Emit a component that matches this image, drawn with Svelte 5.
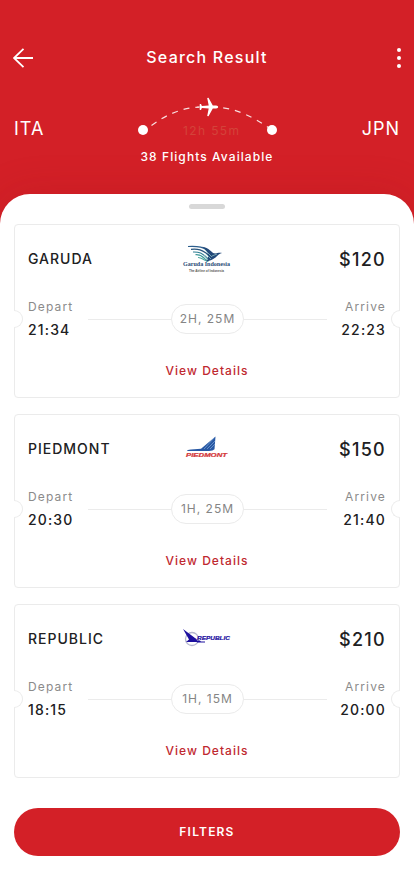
<script>
  let flights = $state([
    { id: 'garuda', airline: 'GARUDA', price: 120, depart: '21:34', arrive: '22:23', duration: '2H, 25M' },
    { id: 'piedmont', airline: 'PIEDMONT', price: 150, depart: '20:30', arrive: '21:40', duration: '1H, 25M' },
    { id: 'republic', airline: 'REPUBLIC', price: 210, depart: '18:15', arrive: '20:00', duration: '1H, 15M' }
  ]);
</script>

{#snippet logo(id)}
  <svg class="logo" width="50" height="36" viewBox="0 0 50 36" aria-hidden="true">
    {#if id === 'garuda'}
      <g fill="none" stroke-width="1.2">
        <path stroke="#2b5d8c" d="M6 5.5C15 5 20 5.3 24 8.5S29 13 32 15" />
        <path stroke="#28547c" d="M9 8.3C17 7.7 20 9 24 12S27 16 30 17" />
        <path stroke="#2c7c91" d="M11 11C18 10.8 20 12.4 23 15S25 18 28 18.5" />
        <path stroke="#419a9c" d="M13.5 13.7C18 13.3 20 15 22 17S24 19.5 27 20" />
        <path stroke="#4fa79d" d="M16 16.5C20 16.2 21 19.7 26 20.3" />
      </g>
      <path fill="#23497a" d="M20 5.8C27 6.6 30 12 32 12.3 34 13 37 11 40 12 36 13 35 16 32 17.4 29 19.3 27 19.6 24 20.6 28 15 26 10 20 5.8Z" />
      <path d="M22 8l8 8M24 13l5 5M22 14l4 5M30 15l5-2" stroke="#9dcfcb" stroke-width=".7" />
      <text x="1" y="25" textLength="47" lengthAdjust="spacingAndGlyphs" class="garuda">Garuda Indonesia</text>
      <text x="7" y="30.5" textLength="35" lengthAdjust="spacingAndGlyphs" class="tagline">The Airline of Indonesia</text>
    {:else if id === 'piedmont'}
      <path fill="#2858a4" d="M33.5 5.5 32.5 18.2Q31 20 27 20H5Q5 19 9 18.6L19 17.8Z" />
      <path d="M32 7 22 18M33 10l-8 8M33 13l-5 5" stroke="#7fa8d7" stroke-width=".7" />
      <text x="4" y="26" textLength="41" lengthAdjust="spacingAndGlyphs" class="piedmont">PIEDMONT</text>
    {:else}
      <circle cx="10" cy="18" r="6.5" fill="none" stroke="#b5b6ce" stroke-width="1.3" />
      <path fill="#1d109f" d="M1 8 13 17Q15 18 15 19.4H18L19 21H4L7 18.5Z" />
      <path fill="#1d109f" d="M15 20.5h8v1h-8z" />
      <text x="15" y="19.3" textLength="33" lengthAdjust="spacingAndGlyphs" class="republic">REPUBLIC</text>
    {/if}
  </svg>
{/snippet}

<div class="screen">
  <header class="header">
    <div class="topbar">
      <button class="icon-button" aria-label="Back">
        <svg width="20" height="20" viewBox="0 0 20 20">
          <path d="M10.5 .8 1 10l9.5 9.2M1 10h19" fill="none" stroke="#fff" stroke-width="1.8" />
        </svg>
      </button>
      <h1>Search Result</h1>
      <button class="icon-button menu" aria-label="More options">
        <svg width="4" height="20" viewBox="0 0 4 20" fill="#fff">
          <circle cx="2" cy="2" r="2" />
          <circle cx="2" cy="10" r="2" />
          <circle cx="2" cy="18" r="2" />
        </svg>
      </button>
    </div>

    <div class="journey">
      <span class="airport">ITA</span>
      <svg width="140" height="44" viewBox="0 0 140 44">
        <path d="M14.5 29.5Q38 12 62 11.2" class="arc" />
        <path d="M135 34Q106 13 82 11.4" class="arc" />
        <circle cx="6" cy="34" r="5" fill="#fff" />
        <circle cx="135" cy="34" r="5" fill="#fff" />
        <path
          class="plane"
          d="M60 10.7h2.6l.2-2.7h1.2l.9 2 6.8-.5-1.5-7.6 1.3-.2 4.3 7.7 3.4.2q2 .3 2 1.4t-2 1.4l-3.4.2-4.3 7.7-1.3-.2 1.5-7.6-6.8-.5-.9 2h-1.2l-.2-2.7H60z"
        />
        <text x="46" y="39" textLength="56" class="total">12h 55m</text>
      </svg>
      <span class="airport right">JPN</span>
    </div>
    <p class="available">38 Flights Available</p>
  </header>

  <main class="sheet">
    <div class="handle"></div>

    <div class="flights">
      {#each flights as flight (flight.id)}
        <article class="card">
          <div class="summary">
            <h2>{flight.airline}</h2>
            {@render logo(flight.id)}
            <span class="price">${flight.price}</span>
          </div>
          <div class="times">
            <div class="stop">
              <span class="label">Depart</span>
              <span class="time">{flight.depart}</span>
            </div>
            <div class="line"></div>
            <span class="duration">{flight.duration}</span>
            <div class="line"></div>
            <div class="stop arrive">
              <span class="label">Arrive</span>
              <span class="time">{flight.arrive}</span>
            </div>
          </div>
          <button class="details">View Details</button>
        </article>
      {/each}
    </div>

    <button class="filters">FILTERS</button>
  </main>
</div>

<style>
  :global(body) {
    margin: 0;
    background: #fff;
  }

  .screen {
    min-height: 896px;
    display: flex;
    flex-direction: column;
    overflow: hidden;
    background: #d32027;
    color: #202022;
    font-family: Inter, 'Liberation Sans', sans-serif;
    font-size: 12px;
  }

  button {
    margin: 0;
    padding: 0;
    border: 0;
    background: none;
    font: inherit;
    color: inherit;
    cursor: pointer;
  }

  svg {
    display: block;
  }

  h1, h2, p {
    margin: 0;
  }

  .header {
    height: 194px;
    box-sizing: border-box;
    padding-top: 46px;
    color: #fff;
  }

  .topbar {
    height: 24px;
    display: grid;
    grid-template-columns: 40px 1fr 40px;
    align-items: center;
    padding: 0 13px;
  }

  .menu {
    justify-self: end;
  }

  h1 {
    padding-bottom: 2px;
    text-align: center;
    font-size: 16px;
    line-height: 22px;
    font-weight: 500;
    letter-spacing: 1.22px;
  }

  .journey {
    display: grid;
    grid-template-columns: 1fr 140px 1fr;
    align-items: end;
    margin-top: 26px;
    padding: 0 14px;
  }

  .airport {
    font-size: 18px;
    line-height: 22px;
    letter-spacing: 1px;
  }

  .right {
    text-align: right;
  }

  .arc {
    fill: none;
    stroke: #fff;
    stroke-opacity: .85;
    stroke-width: 1.2;
    stroke-dasharray: 6 6;
  }

  .plane {
    fill: #fff;
  }

  .total {
    fill: #d3433a;
    font-size: 12px;
  }

  .available {
    margin-top: 7px;
    text-align: center;
    line-height: 20px;
    font-weight: 500;
    letter-spacing: 1.08px;
  }

  .sheet {
    flex: 1;
    padding: 10px 14px 40px;
    border-radius: 30px 30px 0 0;
    background: #fff;
    box-shadow: 0 0 40px rgba(160, 20, 25, .2);
  }

  .handle {
    width: 36px;
    height: 5px;
    margin: 0 auto 15px;
    border-radius: 3px;
    background: #d8d8d8;
  }

  .flights {
    display: flex;
    flex-direction: column;
    gap: 16px;
  }

  .card {
    position: relative;
    height: 174px;
    box-sizing: border-box;
    padding: 16px 13px 0;
    border: 1px solid #ebebeb;
    border-radius: 4px;
  }

  /* ticket notches over the side borders */
  .card::before,
  .card::after {
    content: '';
    position: absolute;
    top: 85px;
    left: -1px;
    width: 9px;
    height: 18px;
    box-sizing: border-box;
    border: 1px solid #ebebeb;
    border-left: 0;
    border-radius: 0 9px 9px 0;
    background: #fff;
  }

  .card::after {
    left: auto;
    right: -1px;
    transform: scaleX(-1);
  }

  .summary {
    height: 36px;
    display: grid;
    grid-template-columns: 1fr 50px 1fr;
    align-items: center;
  }

  h2 {
    padding-bottom: 2px;
    font-size: 14px;
    font-weight: 500;
    letter-spacing: 1px;
  }

  .price {
    text-align: right;
    font-size: 18px;
    font-weight: 500;
    letter-spacing: 1.3px;
  }

  .garuda {
    font: bold 6px 'Liberation Serif', serif;
    fill: #2a4c76;
  }

  .tagline {
    font: bold 3.6px 'Liberation Sans', sans-serif;
    fill: #555;
  }

  .piedmont {
    font: italic bold 5px 'Liberation Sans', sans-serif;
    fill: #d43a3c;
    stroke: #d43a3c;
    stroke-width: .2;
  }

  .republic {
    font: italic bold 6px 'Liberation Sans', sans-serif;
    fill: #1d109f;
    stroke: #1d109f;
    stroke-width: .2;
  }

  .times {
    height: 44px;
    display: flex;
    align-items: center;
    margin-top: 20px;
  }

  .stop {
    width: 60px;
    display: flex;
    flex-direction: column;
    gap: 3px;
    padding-bottom: 2px;
    line-height: 20px;
  }

  .arrive {
    width: 59px;
    text-align: right;
  }

  .label {
    color: #8b8b8b;
    letter-spacing: 1.15px;
  }

  .time {
    font-size: 14px;
    font-weight: 500;
    letter-spacing: 1.15px;
  }

  .line {
    flex: 1;
    height: 1px;
    background: #ebebeb;
  }

  .duration {
    width: 73px;
    box-sizing: border-box;
    border: 1px solid #ebebeb;
    border-radius: 15px;
    line-height: 28px;
    text-align: center;
    color: #858585;
    letter-spacing: 1px;
  }

  .details {
    display: block;
    margin: 20px auto 0;
    line-height: 20px;
    font-weight: 500;
    letter-spacing: 1.03px;
    color: #bf282f;
  }

  .filters {
    display: block;
    width: 100%;
    height: 48px;
    margin-top: 30px;
    padding-bottom: 2px;
    border-radius: 24px;
    background: #d32027;
    color: #fff;
    font-weight: 600;
    letter-spacing: 1.2px;
  }
</style>
